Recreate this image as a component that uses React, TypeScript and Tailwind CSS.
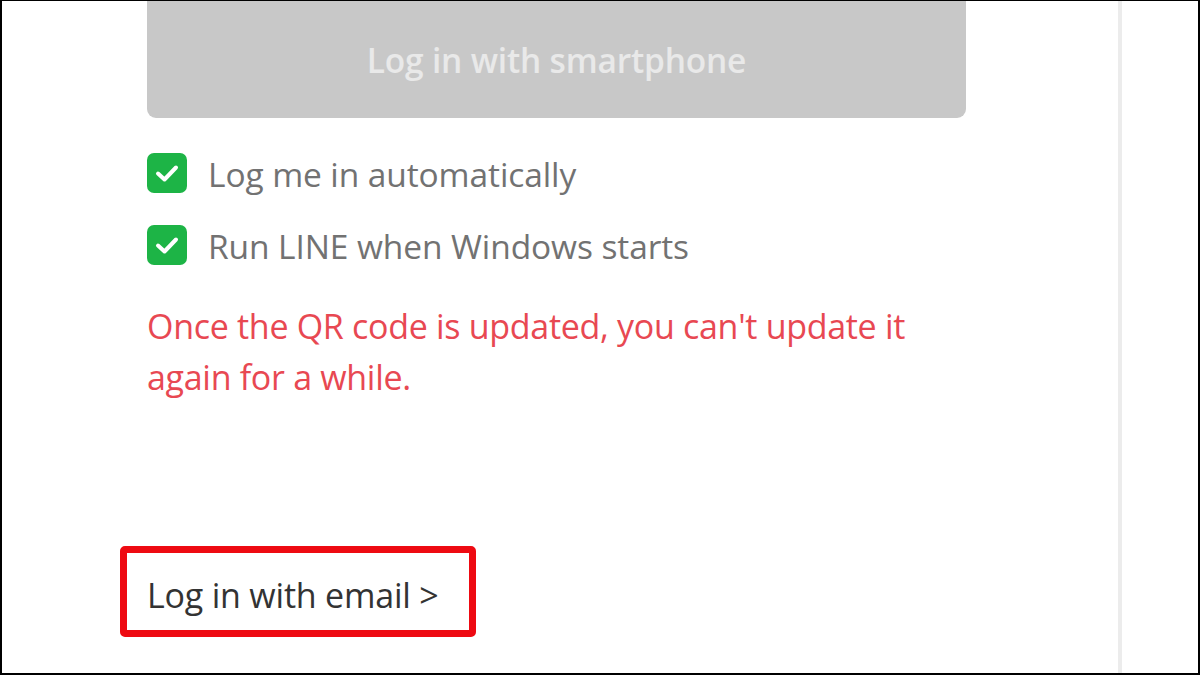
const font = { fontFamily: '"Open Sans", "Noto Sans", sans-serif' }

function CheckBox() {
  return (
    <div className="w-[40px] h-[40px] rounded-[7px] bg-[#1db446] flex items-center justify-center shrink-0">
      <svg width="40" height="40" viewBox="0 0 40 40" fill="none">
        <polyline points="11,20.5 17.5,26.5 29,14.5" stroke="#ffffff" strokeWidth="4" strokeLinecap="round" strokeLinejoin="round" />
      </svg>
    </div>
  )
}

function Option({ label, className }: { label: string; className?: string }) {
  return (
    <div className={"flex items-center gap-[21px] h-[40px] " + (className ?? "")}>
      <CheckBox />
      <span className="text-[33.5px] leading-none text-[#727272] tracking-[-0.1px] pt-[4px]">{label}</span>
    </div>
  )
}

export default function App() {
  return (
    <div
      className="w-[1200px] h-[675px] bg-white border-t border-l-2 border-r-2 border-b-2 border-black flex overflow-hidden"
      style={font}
    >
      <div className="w-[1116px] pl-[145px] flex flex-col">
        <button className="w-[819px] h-[117px] rounded-b-[9px] bg-[#c8c8c8] flex items-center justify-center pt-[2px]">
          <span className="text-[33.5px] font-semibold text-[#e9e9e9] tracking-[-0.2px]">Log in with smartphone</span>
        </button>

        <Option label="Log me in automatically" className="mt-[35px]" />
        <Option label="Run LINE when Windows starts" className="mt-[32px]" />

        <p className="mt-[36px] w-[800px] text-[34px] leading-[51px] text-[#e84852] tracking-[-0.3px]">
          Once the QR code is updated, you can't update it again for a while.
        </p>

        <div className="mt-auto mb-[36px] -ml-[27px] w-[356px] h-[91px] border-[7px] border-[#ee0a12] rounded-[5px] flex items-center pl-[20px] pt-[8px]">
          <span className="text-[34px] text-[#333333] tracking-[-0.2px]">Log in with email &gt;</span>
        </div>
      </div>

      <div className="w-[4px] bg-[#ececec]" />
      <div className="flex-1" />
    </div>
  )
}
